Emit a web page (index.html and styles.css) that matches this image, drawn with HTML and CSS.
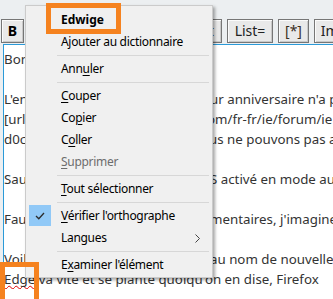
FILE: index.html
```html
<!DOCTYPE html>
<html lang="fr">
<head>
<meta charset="utf-8">
<link rel="stylesheet" href="styles.css">
</head>
<body>
<div class="toolbar">
  <button class="btn w-b"><b>B</b></button>
  <button class="btn w-i"><i>I</i></button>
  <button class="btn w-u"><u>U</u></button>
  <button class="btn w-quote">Quote</button>
  <button class="btn w-code">Code</button>
  <button class="btn w-list">List</button>
  <button class="btn w-liste">List=</button>
  <button class="btn w-star">[*]</button>
  <button class="btn w-img">Img</button>
</div>
<div class="editor">
  <div class="ln">Bonjour,</div>
  <div class="ln"></div>
  <div class="ln"><span class="cut w206">L'envoi de messages po</span><span>ur anniversaire n'a pas fonctionné</span></div>
  <div class="ln"><span class="cut w203">[url=https://answers.microsoft.c</span><span>om/fr-fr/ie/forum/ie11-iewindows</span></div>
  <div class="ln"><span class="cut w205">d0c4-4e5f-8a1b-9e2f3c1a7b6d] Vo</span><span>us ne pouvons pas afficher la page</span></div>
  <div class="ln"></div>
  <div class="ln"><span class="cut w206">Sauf avec le protocole TL</span><span>S activé en mode automatique</span></div>
  <div class="ln"></div>
  <div class="ln"><span class="cut w206">Faute de réponse dans les com</span><span>mentaires, j'imagine que</span></div>
  <div class="ln"></div>
  <div class="ln"><span class="cut w206">Voilà ce qu'on obtient </span><span>au nom de nouvelles fonctionnalités</span></div>
  <div class="ln"><span class="typo">Edge</span>&nbsp;va vite et se plante quoiqu'on en dise, Firefox</div>
</div>

<div class="menu">
  <div class="item bold">Edwige</div>
  <div class="item">Ajouter au dictionnaire</div>
  <div class="sep"></div>
  <div class="item">Ann<u>u</u>ler</div>
  <div class="sep"></div>
  <div class="item"><u>C</u>ouper</div>
  <div class="item">Co<u>p</u>ier</div>
  <div class="item">C<u>o</u>ller</div>
  <div class="item disabled"><u>S</u>upprimer</div>
  <div class="sep"></div>
  <div class="item"><u>T</u>out sélectionner</div>
  <div class="sep"></div>
  <div class="item checked"><span class="check"><svg width="10" height="8" viewBox="0 0 10 8"><polyline points="1,4 3.8,6.8 9,1" fill="none" stroke="#2b2b2b" stroke-width="1.3"/></svg></span><u>V</u>érifier l'orthographe</div>
  <div class="item">Langues<span class="arrow"><svg width="5" height="9" viewBox="0 0 5 9"><polyline points="0.5,0.5 4.5,4.5 0.5,8.5" fill="none" stroke="#444" stroke-width="1"/></svg></span></div>
  <div class="sep"></div>
  <div class="item">E<u>x</u>aminer l'élément</div>
</div>

<div class="mark mark-top"></div>
<div class="mark mark-bottom"></div>
</body>
</html>
```
FILE: styles.css
```css
html, body {
  margin: 0;
  padding: 0;
  height: 100%;
  overflow: hidden;
}
body {
  background: #eceff1;
  font-family: "Noto Sans", "DejaVu Sans", sans-serif;
  position: relative;
}
.toolbar {
  display: flex;
  gap: 5px;
  padding: 19px 0 0 1px;
  height: 24px;
  overflow: hidden;
}
.btn {
  box-sizing: border-box;
  height: 24px;
  padding: 0;
  margin: 0;
  border: 1px solid #767676;
  box-shadow: inset 1px 1px 0 #fbfbfb, inset -1px -1px 0 #c9c9c9;
  background: #e9e9e9;
  font-family: "Noto Sans", "DejaVu Sans", sans-serif;
  font-size: 14px;
  color: #222;
  line-height: 20px;
  text-align: center;
  flex: none;
}
.btn b { color: #000; }
.w-b { width: 23px; }
.w-i { width: 23px; }
.w-u { width: 23px; }
.w-quote { width: 46px; }
.w-code { width: 42px; }
.w-list { width: 39px; }
.w-liste { width: 46px; }
.w-star { width: 31px; color: #3a2f1e; }
.w-img { width: 40px; }

.editor {
  margin: 1px 0 0 3px;
  border-top: 1px solid #2b9ad8;
  border-left: 1px solid #2b9ad8;
  background: #fff;
  height: 260px;
  padding: 4px 0 0 0;
  color: #333;
  font-size: 13.3px;
  overflow: hidden;
}
.ln {
  height: 20px;
  line-height: 20px;
  white-space: nowrap;
  overflow: hidden;
  display: flex;
}
.cut {
  display: inline-block;
  overflow: hidden;
  white-space: nowrap;
  flex: none;
}
.w206 { width: 206px; }
.w205 { width: 205px; }
.w203 { width: 203px; }
.typo {
  text-decoration: underline wavy #e00000;
  text-decoration-thickness: 1px;
  text-underline-offset: 1px;
  text-decoration-skip-ink: none;
}

.menu {
  position: absolute;
  left: 25px;
  top: 5px;
  width: 182px;
  padding: 3px 2px 1px;
  background: #f0f0f0;
  border: 1px solid #cbcbcb;
  box-shadow: 2px 2px 3px rgba(0, 0, 0, 0.35);
  font-size: 12px;
  letter-spacing: -0.3px;
  color: #000;
}
.item {
  height: 22px;
  line-height: 22px;
  padding-left: 33px;
  position: relative;
  white-space: nowrap;
}
.item u { text-decoration-thickness: 1px; text-underline-offset: 2px; }
.bold { font-weight: bold; letter-spacing: 0; }
.disabled { color: #6d6d6d; }
.sep {
  height: 1px;
  margin: 2px 1px 2px 29px;
  background: #d7d7d7;
}
.check {
  position: absolute;
  left: 1px;
  top: 0;
  width: 22px;
  height: 21px;
  background: #91c9f7;
  display: flex;
  align-items: center;
  justify-content: center;
}
.arrow {
  position: absolute;
  right: 10px;
  top: 7px;
  display: flex;
}
.mark {
  position: absolute;
  border: 5px solid #f5821f;
  box-sizing: border-box;
}
.mark-top {
  left: 46px;
  top: 3px;
  width: 75px;
  height: 31px;
}
.mark-bottom {
  left: 0;
  top: 262px;
  width: 39px;
  height: 50px;
}
```
